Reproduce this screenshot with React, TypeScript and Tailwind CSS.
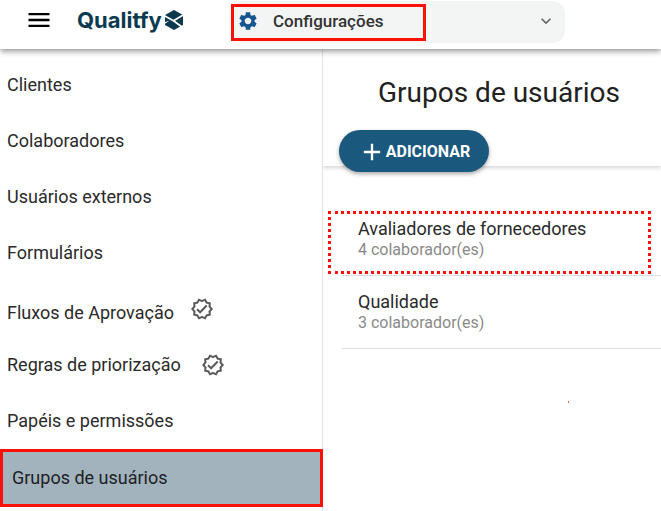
import { MdAdd, MdKeyboardArrowDown, MdMenu, MdOutlineVerified, MdSettings } from 'react-icons/md';

type MenuItem = { label: string; badge?: 'raised' | 'inline' };

const MENU: MenuItem[] = [
  { label: 'Clientes' },
  { label: 'Colaboradores' },
  { label: 'Usuários externos' },
  { label: 'Formulários' },
  { label: 'Fluxos de Aprovação', badge: 'raised' },
  { label: 'Regras de priorização', badge: 'inline' },
  { label: 'Papéis e permissões' },
];

const GROUPS = [
  { name: 'Avaliadores de fornecedores', members: 4, highlighted: true },
  { name: 'Qualidade', members: 3, highlighted: false },
];

function Logo() {
  return (
    <a href="#" className="flex items-center gap-0.5 text-[#0b3a4f]">
      <span className="font-[Inter,sans-serif] text-[22px] leading-6 font-bold">Qualitfy</span>
      <svg viewBox="0 0 20 20" className="size-5" aria-hidden="true">
        <path d="M10 1 L18 5.5 V14.5 L10 19 L2 14.5 V5.5 Z" fill="currentColor" stroke="currentColor" strokeWidth="2" strokeLinejoin="round" />
        <path d="M0 5.5 L9.5 10.8 L18 17 M20 4.5 L9.5 10.8" fill="none" stroke="#fff" strokeWidth="1.7" />
        <path d="M0 12.5 L5.5 10.5 L0 14.5 Z" fill="#fff" />
      </svg>
    </a>
  );
}

function Header() {
  return (
    <header className="relative z-10 flex h-[49px] items-start bg-white shadow-[0_2px_6px_rgba(0,0,0,0.45)]">
      <div className="flex h-10 w-[231px] shrink-0 items-center gap-6 pl-[25px]">
        <button aria-label="Menu"><MdMenu size={28} className="text-black" /></button>
        <Logo />
      </div>
      <div className="relative mt-px w-[334px] rounded-xl bg-[#f3f5f5]">
        <select aria-label="Módulo" className="h-[42px] w-full appearance-none rounded-xl pl-[42px] text-[17px] font-medium text-[#333]">
          <option>Configurações</option>
        </select>
        <MdSettings size={22} className="pointer-events-none absolute top-[9px] left-1.5 text-[#15568f]" />
        <MdKeyboardArrowDown size={20} className="pointer-events-none absolute top-[10px] right-[9px] text-[#666]" />
        <div className="pointer-events-none absolute top-[3px] left-0 h-[37px] w-[195px] border-3 border-[#fb1108]" />
      </div>
    </header>
  );
}

function Sidebar() {
  return (
    <nav className="w-[323px] shrink-0 border-r border-[#e2e2e2] pt-2 text-lg text-[#2a2a2a]">
      {MENU.map(item => (
        <a key={item.label} href="#" className="flex h-14 items-center px-[7px]">
          {item.badge === 'raised' ? <span className="pt-2">{item.label}</span> : item.label}
          {item.badge === 'raised' && <MdOutlineVerified size={24} className="ml-4 text-[#5a5a5a]" />}
          {item.badge === 'inline' && <MdOutlineVerified size={24} className="ml-5 text-[#5a5a5a]" />}
        </a>
      ))}
      <a href="#" aria-current="page" className="-mr-px flex h-[58px] items-center border-3 border-[#fb1108] bg-[#a3b3bd] px-[9px] text-[#1c2225]">
        Grupos de usuários
      </a>
    </nav>
  );
}

function Groups() {
  return (
    <main className="min-w-0 flex-1 overflow-hidden">
      <div className="h-[117px] pt-6 pl-[55px] shadow-[0_2px_4px_rgba(0,0,0,0.16)]">
        <h1 className="text-[28px] leading-10 text-[#212121]">Grupos de usuários</h1>
      </div>
      <button className="relative -mt-9 ml-4 flex h-[42px] w-[150px] items-center justify-center rounded-full bg-[#1b587e] pt-px font-bold text-white shadow-[0_2px_4px_rgba(0,0,0,0.35)]">
        <MdAdd size={28} />
        ADICIONAR
      </button>
      <ul className="mt-[31px] pl-[5px]">
        {GROUPS.map(group => (
          <li key={group.name} className="relative">
            <a href="#" className="ml-[14px] block h-[73px] border-b border-[#dedede] pt-[15px] pl-4">
              <span className="block text-lg leading-[22px] text-[#2a2a2a]">{group.name}</span>
              <span className="block text-base leading-5 text-[#8a8a8a]">{group.members} colaborador(es)</span>
            </a>
            {group.highlighted && <div className="pointer-events-none absolute top-2 right-[10px] bottom-0.5 left-0 border-3 border-dotted border-[#fb1108]" />}
          </li>
        ))}
      </ul>
      <div className="mt-[52px] ml-[245px] h-0.5 w-px bg-[#f0604f]" />
    </main>
  );
}

export default function App() {
  return (
    <div className="min-h-screen bg-white font-[Roboto,sans-serif]">
      <Header />
      <div className="flex min-h-[462px]">
        <Sidebar />
        <Groups />
      </div>
    </div>
  );
}
